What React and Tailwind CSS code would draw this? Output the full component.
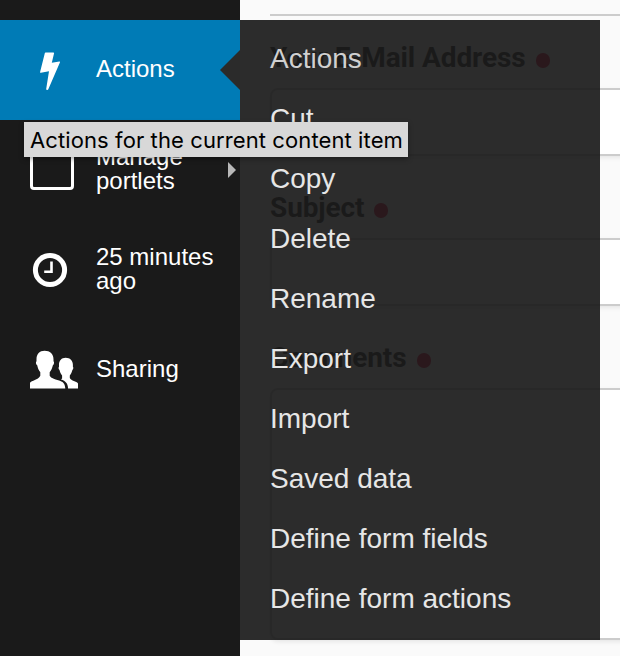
const menuItems = [
  'Actions',
  'Cut',
  'Copy',
  'Delete',
  'Rename',
  'Export',
  'Import',
  'Saved data',
  'Define form fields',
  'Define form actions',
];

function BoltIcon() {
  return (
    <svg width="20" height="38" viewBox="0 0 20 38" fill="#fff" className="mt-[2px] ml-[10px]">
      <path d="M5.600.6h7.900q.8 0 .5.800L11.800 10.700l7.600-1.200q.9 0 .6.800L8.300 37.300q-.2.600-1.100.6-1.200 0-1-.9L9 19.200.9 20.800q-1 .1-.8-.9L4.800 1.200Q4.900.6 5.600.6Z" />
    </svg>
  );
}

function PortletsIcon() {
  return <span className="block h-[40px] w-[44px] rounded-[4px] border-[3px] border-white" />;
}

function ClockIcon() {
  return (
    <svg width="36" height="36" viewBox="0 0 36 36" fill="none" stroke="#fff" className="ml-[2px]">
      <circle cx="18" cy="18" r="14.6" strokeWidth="5" />
      <path d="M19.5 9.5v10.200h-7.300" strokeWidth="2.600" />
    </svg>
  );
}

function SharingIcon() {
  return (
    <svg width="48" height="39" viewBox="0 0 48 39" fill="#fff" className="-mt-[2px]">
      <path d="M14.6.8C20 .8 23.5 4.1 23.5 9.2v2c1 .6.6 3.4-.6 4.1-.7 3-1.700 5.100-3.200 6.900v3.500c1.400 2.600 5 3.400 8.500 4.500 4.900 1.400 6.800 3 7.100 8.300H0v-5.800c1.600-2.100 8-2.400 10.300-6.900v-3.600c-1.500-1.700-2.500-4-3.100-6.900-1.300-.7-1.700-3.500-.7-4.100v-2C6.500 4.100 9.600.8 14.600.8Z" />
      <path d="M35.600 7.700c4.500 0 7.300 2.800 7.300 7v2c.8.6.5 2.600-.5 3.200-.6 2.300-1.300 4-2.600 5.500v2.700c1.500 2.900 6.500 3.200 8.200 5.300v5.100H38.100c-.2-4.800-2.400-7.500-7.100-8.900.2-.5.600-.8 1.100-1.200v-3c-1.300-1.500-2.100-3.200-2.600-5.500-1-.6-1.300-2.600-.5-3.200v-2c0-4.200 2.600-7 6.600-7Z" />
    </svg>
  );
}

function SideItem({ icon, children, active, arrow }) {
  return (
    <li className={`flex h-[100px] items-center pl-[30px] ${active ? 'bg-[#007bb6]' : ''}`}>
      <span className="flex w-[66px] shrink-0 items-center">{icon}</span>
      <span className="w-[124px] pb-[2px] text-[24px] leading-[24px] text-white">{children}</span>
      {active && (
        <svg width="20" height="40" viewBox="0 0 20 40" className="shrink-0">
          <path d="M20 0v40L0 20Z" fill="#2b2b2b" />
        </svg>
      )}
      {arrow && (
        <svg width="8" height="16" viewBox="0 0 8 16" className="ml-[8px] shrink-0">
          <path d="M0 0l8 8-8 8Z" fill="#b8b8b8" />
        </svg>
      )}
    </li>
  );
}

function Label({ children }) {
  return (
    <div className="flex h-[82px] items-center pt-[22px] font-['Roboto'] text-[28px] leading-[32px] font-bold tracking-[-0.1px] text-[#222]">
      {children}
      <span className="mt-[4px] ml-[10px] h-[15px] w-[14px] rounded-[7px] bg-[#e00038]" />
    </div>
  );
}

const boxClass =
  'w-[380px] rounded-[8px] border-2 border-[#ccc] bg-white shadow-[0_2px_4px_rgba(0,0,0,0.08)]';

export default function App() {
  return (
    <div className="relative flex h-[656px] w-[620px] overflow-hidden bg-[#fafafa] font-['Liberation_Sans',Arial,sans-serif]">
      <ul className="w-[240px] shrink-0 bg-[#1a1a1a] pt-[20px]">
        <SideItem active icon={<BoltIcon />}>Actions</SideItem>
        <SideItem arrow icon={<PortletsIcon />}>Manage portlets</SideItem>
        <SideItem icon={<ClockIcon />}>25 minutes ago</SideItem>
        <SideItem icon={<SharingIcon />}>Sharing</SideItem>
      </ul>

      <main className="w-[380px] shrink-0 overflow-hidden pl-[30px]">
        <div className="h-[16px] w-[380px] border-b-2 border-[#ccc]" />
        <div className="-mt-[10px]">
          <Label>Your E-Mail Address</Label>
          <div className={`${boxClass} h-[68px]`} />
          <Label>Subject</Label>
          <div className={`${boxClass} h-[68px]`} />
          <Label>Comments</Label>
          <div className={`${boxClass} h-[252px]`} />
        </div>
      </main>

      <nav className="absolute top-[20px] left-[240px] h-[620px] w-[360px] bg-[#1a1a1a]/92 pt-[9px] pl-[30px]">
        <ul>
          {menuItems.map((item, i) => (
            <li
              key={item}
              className={`h-[60px] text-[28px] leading-[60px] ${i === 0 ? 'text-[#d0d0d0]' : 'text-[#e6e6e6]'}`}
            >
              {item}
            </li>
          ))}
        </ul>
      </nav>

      <div className="absolute top-[122px] left-[24px] h-[35px] w-[384px] bg-[#d8d8d8] pl-[6px] font-['Inter'] text-[22px] leading-[36px] tracking-[0.1px] whitespace-nowrap text-black shadow-[0_2px_5px_rgba(0,0,0,0.35)]">
        Actions for the current content item
      </div>
    </div>
  );
}
